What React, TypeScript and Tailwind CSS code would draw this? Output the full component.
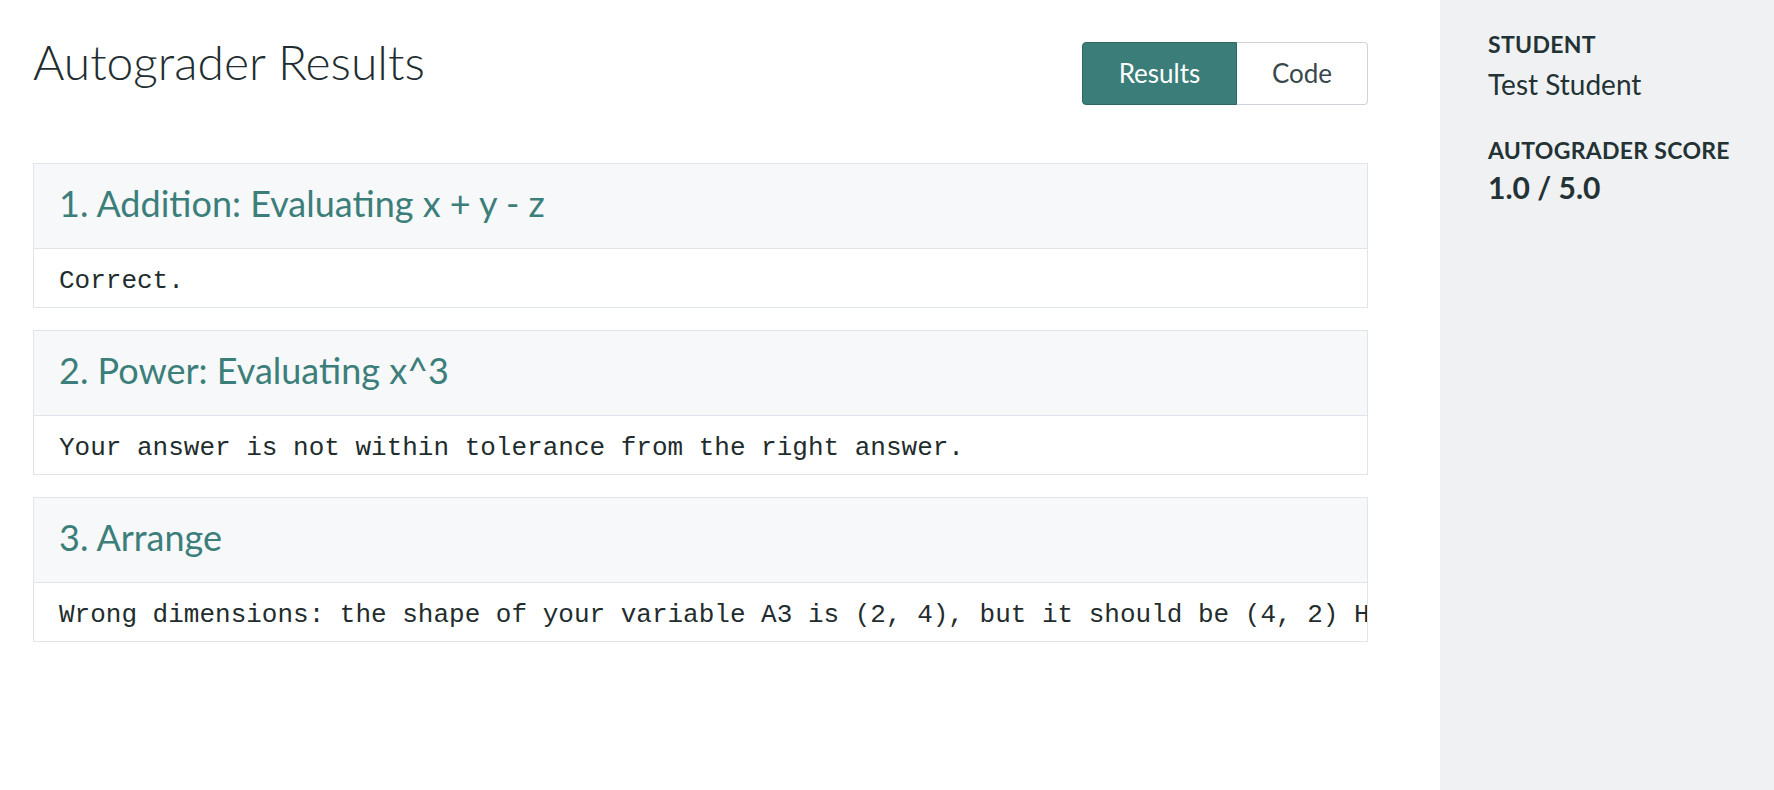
import React from 'react';

interface TestResult {
  title: string;
  output: string;
}

const results: TestResult[] = [
  { title: '1. Addition: Evaluating x + y - z', output: 'Correct.' },
  { title: '2. Power: Evaluating x^3', output: 'Your answer is not within tolerance from the right answer.' },
  {
    title: '3. Arrange',
    output:
      'Wrong dimensions: the shape of your variable A3 is (2, 4), but it should be (4, 2) Hint: use np.reshape to change the shape of your array.',
  },
];

function ResultCard({ result }: { result: TestResult }) {
  return (
    <div className="border border-[#e1e4e8] bg-white overflow-hidden">
      <div className="h-[85px] flex items-center px-[25px] pb-[6px] bg-[#f7f8fa] border-b border-[#e1e4e8]">
        <h3 className="text-[36px] leading-none text-[#3c7f7a] font-normal">{result.title}</h3>
      </div>
      <div className="h-[58px] flex items-center px-[25px] pt-[6px] overflow-hidden">
        <pre className="min-w-0 font-['Liberation_Mono',monospace] text-[26px] leading-none text-[#1f2d2e] whitespace-pre">
          {result.output}
        </pre>
      </div>
    </div>
  );
}

export default function App() {
  return (
    <div className="flex w-full min-h-[790px] font-['Lato',sans-serif] text-[#233234]">
      <main className="flex-1 min-w-0 pl-[33px] pr-[72px]">
        <div className="flex justify-between items-start pt-[42px]">
          <h1 className="text-[48px] leading-[48px] font-light mt-[-4px] text-[#1f2e30]">Autograder Results</h1>
          <div className="flex h-[63px]">
            <button className="w-[155px] h-full rounded-l-[4px] bg-[#3b7d78] border border-[#2e6863] text-white text-[26px]">
              Results
            </button>
            <button className="w-[131px] h-full rounded-r-[4px] bg-white border border-l-0 border-[#cfd4dc] text-[#3a484c] text-[26px]">
              Code
            </button>
          </div>
        </div>

        <div className="mt-[58px] flex flex-col gap-[22px]">
          {results.map((r) => (
            <ResultCard key={r.title} result={r} />
          ))}
        </div>
      </main>

      <aside className="w-[334px] shrink-0 bg-[#f0f1f3] pl-[48px] pt-[33px]">
        <div className="text-[23px] leading-[22px] font-bold tracking-[0.3px]">STUDENT</div>
        <div className="mt-[15px] text-[28px] leading-[28px]">Test Student</div>
        <div className="mt-[41px] text-[23px] leading-[22px] font-bold tracking-[0.3px]">AUTOGRADER SCORE</div>
        <div className="mt-[11px] text-[30px] leading-[30px] font-bold">1.0 / 5.0</div>
      </aside>
    </div>
  );
}
